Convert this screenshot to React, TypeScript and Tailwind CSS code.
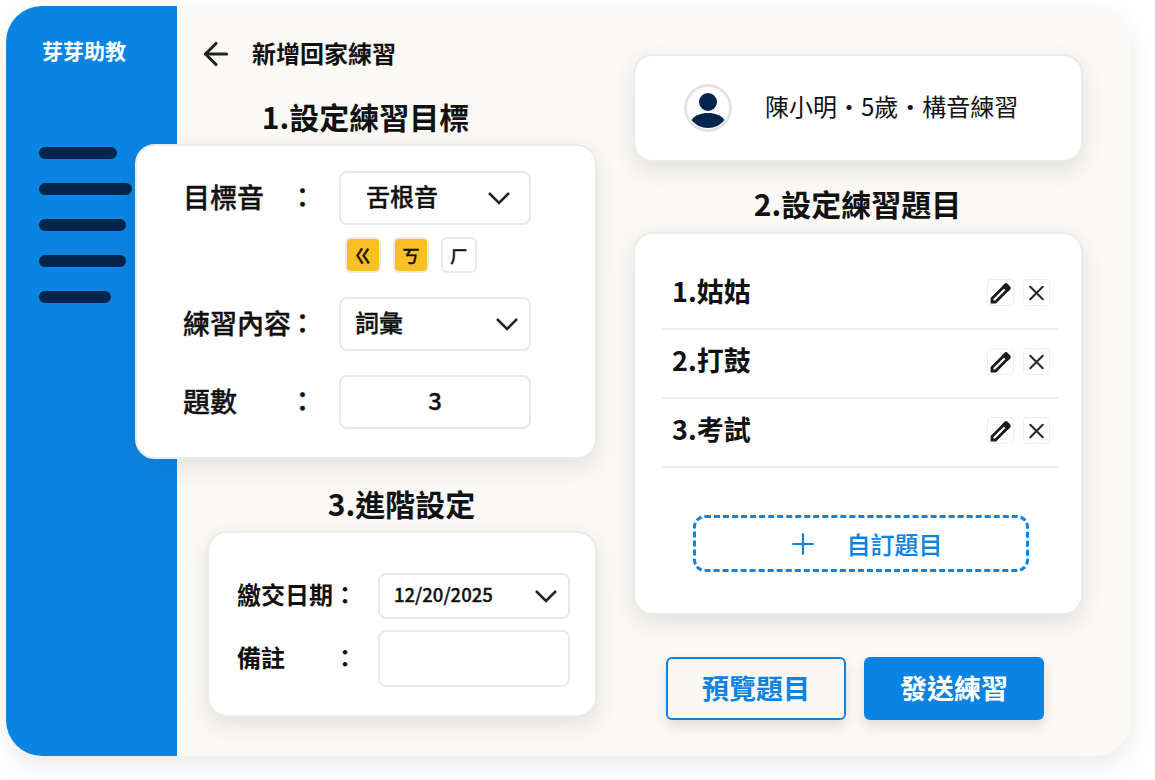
import { ArrowLeft, Plus, X } from 'lucide-react'

const font = '[font-family:"Noto_Sans_CJK_TC","Noto_Sans",sans-serif]'

const cardClass = 'bg-white rounded-[20px] border-2 border-[#ebebe9] shadow-[0_8px_22px_rgba(60,50,40,0.12)]'
const fieldClass = 'bg-white rounded-lg border-2 border-[#e9e9e9] flex items-center'
const mediumText = '[-webkit-text-stroke-width:0.35px]'

function Chevron() {
  return (
    <svg width="24" height="14" viewBox="0 0 24 14" fill="none">
      <path d="M2 2 L12 12 L22 2" stroke="#222" strokeWidth="2.5" />
    </svg>
  )
}

function PencilIcon() {
  return (
    <svg width="24" height="24" viewBox="0 0 24 24" fill="none">
      <path d="M3 17.5 L15 5.5 L18.5 9 L6.5 21 L3 21 Z" stroke="#1c1c1c" strokeWidth="2.8" strokeLinejoin="miter" />
      <path d="M15.5 2.8 a2.2 2.2 0 0 1 3 0 L21.2 5.5 a2.2 2.2 0 0 1 0 3 L18.5 11 L13 5.5 Z" fill="#1c1c1c" />
    </svg>
  )
}

function Avatar() {
  return (
    <svg width="48" height="48" viewBox="0 0 48 48">
      <circle cx="24" cy="24" r="22.5" fill="#fff" stroke="#e4e4e4" strokeWidth="3" />
      <circle cx="24" cy="18" r="9" fill="#05254e" />
      <path d="M7.5 36 C11 31 17 29 24 29 C31 29 37 31 40.5 36 C36.5 41 30.5 44 24 44 C17.5 44 11.5 41 7.5 36 Z" fill="#05254e" />
    </svg>
  )
}

function Label({ text }: { text: string }) {
  return (
    <div className={`flex w-[130px] pb-[3px] text-[27px] leading-none font-medium text-[#111] ${mediumText}`}>
      <span className="w-[106px] whitespace-nowrap">{text}</span>
      <span className="w-[24px]">：</span>
    </div>
  )
}

function Chip({ text, on }: { text: string; on?: boolean }) {
  return (
    <div
      className={`w-9 h-9 rounded-md border-2 border-[#e9e9e9] flex items-center justify-center text-[18px] font-medium text-[#111] ${mediumText} ${
        on ? 'bg-[#fbbf24]' : 'bg-white'
      }`}
    >
      {text}
    </div>
  )
}

function TopicRow({ text }: { text: string }) {
  return (
    <div className="h-[69px] pb-1 border-b-2 border-[#eeeeee] flex items-center justify-between pl-[10px] pr-[9px]">
      <span className="pb-[2px] text-[27px] font-bold text-[#111]">{text}</span>
      <div className="flex gap-[9px]">
        <div className="w-[27px] h-[27px] rounded border border-[#eeeeee] flex items-center justify-center">
          <PencilIcon />
        </div>
        <div className="w-[27px] h-[27px] rounded border border-[#eeeeee] flex items-center justify-center">
          <X size={26} strokeWidth={2} color="#262626" />
        </div>
      </div>
    </div>
  )
}

export default function App() {
  return (
    <div className={`w-[1155px] h-[780px] bg-white p-[6px] overflow-hidden ${font}`}>
      <div className="w-[1125px] h-[750px] flex rounded-[36px] shadow-[0_10px_26px_rgba(60,50,40,0.1)]">
        <aside className="w-[171px] bg-[#0a84e3] rounded-l-[36px] pl-[33px]">
          <div className="mt-[30px] text-[21px] leading-[28px] font-bold text-white pl-[3px]">芽芽助教</div>
          <div className="mt-[83px] flex flex-col gap-6">
            <div className="w-[78px] h-3 rounded-full bg-[#05254e]" />
            <div className="w-[93px] h-3 rounded-full bg-[#05254e]" />
            <div className="w-[87px] h-3 rounded-full bg-[#05254e]" />
            <div className="w-[87px] h-3 rounded-full bg-[#05254e]" />
            <div className="w-[72px] h-3 rounded-full bg-[#05254e]" />
          </div>
        </aside>

        <main className="flex-1 bg-[#faf9f5] rounded-r-[36px] flex">
          <section className="w-[419px] pt-[32px]">
            <div className="h-8 flex items-center pl-[21px]">
              <ArrowLeft size={36} strokeWidth={2.1} color="#222" className="shrink-0" />
              <span className="ml-[18px] pb-[2px] text-2xl font-bold text-[#111]">新增回家練習</span>
            </div>

            <div className="-ml-[42px] w-[461px] mt-[28px] relative">
              <h2 className="h-10 leading-[36px] text-center text-[30px] font-bold text-[#111]">1.設定練習目標</h2>
              <div className={`${cardClass} mt-[6px] w-[462px] h-[315px] pl-[46px] pt-[25px]`}>
                <div className="flex items-center">
                  <Label text="目標音" />
                  <div className={`${fieldClass} ml-[26px] w-[192px] h-[54px] pl-[25px] pr-[18px] justify-between`}>
                    <span className={`pb-1 text-2xl font-medium text-[#111] ${mediumText}`}>舌根音</span>
                    <Chevron />
                  </div>
                </div>
                <div className="flex gap-3 ml-[162px] mt-[12px]">
                  <Chip text="ㄍ" on />
                  <Chip text="ㄎ" on />
                  <Chip text="ㄏ" />
                </div>
                <div className="flex items-center mt-[24px]">
                  <Label text="練習內容" />
                  <div className={`${fieldClass} ml-[26px] w-[192px] h-[54px] pl-[14px] pr-[10px] justify-between`}>
                    <span className={`pb-1 text-2xl font-medium text-[#111] ${mediumText}`}>詞彙</span>
                    <Chevron />
                  </div>
                </div>
                <div className="flex items-center mt-[24px]">
                  <Label text="題數" />
                  <div className={`${fieldClass} ml-[26px] w-[192px] h-[54px] justify-center`}>
                    <span className={`pb-1 text-2xl font-medium text-[#111] ${mediumText}`}>3</span>
                  </div>
                </div>
              </div>
            </div>

            <div className="ml-[30px] w-[389px] mt-[26px]">
              <h2 className="h-10 leading-[36px] text-center text-[30px] font-bold text-[#111]">3.進階設定</h2>
              <div className={`${cardClass} mt-[6px] w-[390px] h-[186px] pl-[28px] pt-[40px]`}>
                <div className="flex items-center">
                  <div className="flex w-[141px] pb-1 text-2xl leading-none font-bold text-[#111]">
                    <span className="w-[96px]">繳交日期</span>
                    <span>：</span>
                  </div>
                  <div className={`${fieldClass} w-[192px] h-[46px] pl-[14px] pr-[10px] justify-between`}>
                    <span className={`pb-[2px] text-[18.5px] font-medium text-[#111] ${mediumText}`}>12/20/2025</span>
                    <Chevron />
                  </div>
                </div>
                <div className="flex items-center mt-[11px]">
                  <div className="flex w-[141px] pb-1 text-2xl leading-none font-bold text-[#111]">
                    <span className="w-[96px]">備註</span>
                    <span>：</span>
                  </div>
                  <div className={`${fieldClass} w-[192px] h-[57px]`} />
                </div>
              </div>
            </div>
          </section>

          <section className="ml-[37px] w-[449px] pt-[48px]">
            <div className={`${cardClass} w-[450px] h-[108px] flex items-center pl-[49px]`}>
              <Avatar />
              <span className="ml-[33px] pb-1 text-2xl text-[#111]">陳小明・5歲・構音練習</span>
            </div>

            <h2 className="mt-[23px] h-10 leading-[36px] text-center text-[30px] font-bold text-[#111]">2.設定練習題目</h2>

            <div className={`${cardClass} mt-[7px] w-[450px] h-[383px] pl-[27px] pr-[22px] pt-[27px]`}>
              <TopicRow text="1.姑姑" />
              <TopicRow text="2.打鼓" />
              <TopicRow text="3.考試" />
              <div className="mt-[47px] ml-[31px] w-[336px] h-[57px] rounded-xl border-[3px] border-dashed border-[#0a84e3] flex items-center justify-center pl-[6px] text-[#0a84e3]">
                <Plus size={34} strokeWidth={1.5} className="shrink-0" />
                <span className="ml-[27px] text-2xl font-medium [-webkit-text-stroke-width:0.15px]">自訂題目</span>
              </div>
            </div>

            <div className="mt-[42px] pl-[33px] flex gap-[18px]">
              <button className="w-[180px] h-[63px] rounded-md border-2 border-[#0a84e3] bg-[#f8f7f3] text-[27px] font-bold text-[#0a84e3] shadow-[0_6px_12px_rgba(60,50,40,0.14)]">
                預覽題目
              </button>
              <button className="w-[180px] h-[63px] rounded-md bg-[#0a84e3] text-[27px] font-bold text-white shadow-[0_6px_12px_rgba(60,50,40,0.14)]">
                發送練習
              </button>
            </div>
          </section>
        </main>
      </div>
    </div>
  )
}
